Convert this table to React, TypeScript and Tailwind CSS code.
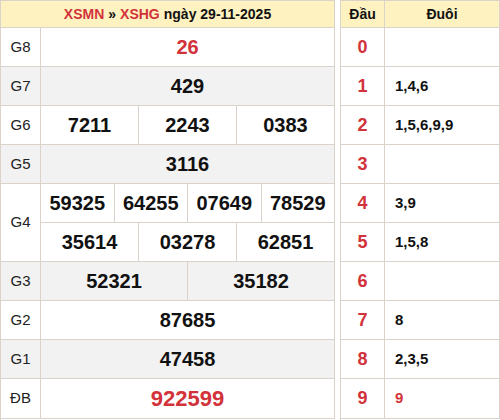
const border = "border-[#dbd2ca]";

type Row = { label: string; cells: string[][]; gray?: boolean; red?: boolean };

const rows: Row[] = [
  { label: "G8", cells: [["26"]], red: true },
  { label: "G7", cells: [["429"]], gray: true },
  { label: "G6", cells: [["7211", "2243", "0383"]] },
  { label: "G5", cells: [["3116"]], gray: true },
  { label: "G4", cells: [["59325", "64255", "07649", "78529"], ["35614", "03278", "62851"]] },
  { label: "G3", cells: [["52321", "35182"]], gray: true },
  { label: "G2", cells: [["87685"]] },
  { label: "G1", cells: [["47458"]], gray: true },
  { label: "ĐB", cells: [["922599"]], red: true },
];

const loto: [string, string][] = [
  ["0", ""],
  ["1", "1,4,6"],
  ["2", "1,5,6,9,9"],
  ["3", ""],
  ["4", "3,9"],
  ["5", "1,5,8"],
  ["6", ""],
  ["7", "8"],
  ["8", "2,3,5"],
  ["9", "9"],
];

const App = () => {
  return (
    <div
      className="flex gap-[5px] bg-white w-[500px] h-[420px]"
      style={{ fontFamily: '"Liberation Sans", Arial, sans-serif' }}
    >
      {/* Result table */}
      <div className={`w-[335px] border-l border-t ${border} flex flex-col`}>
        <div
          className={`h-[27px] bg-[#fff2c1] border-r border-b ${border} flex items-center justify-center text-[14px] font-bold text-[#111]`}
        >
          <span className="text-[#d2323a]">XSMN</span>
          <span className="mx-1">»</span>
          <span className="text-[#d2323a]">XSHG</span>
          <span className="ml-1">ngày 29-11-2025</span>
        </div>
        {rows.map((row, i) => (
          <div key={row.label} className={`flex ${row.gray ? "bg-[#f2f2f2]" : "bg-white"}`}>
            <div
              className={`w-[40px] shrink-0 border-r border-b ${border} flex items-center justify-center text-[15px] text-[#222]`}
            >
              {row.label}
            </div>
            <div className="flex-1 flex flex-col">
              {row.cells.map((line, j) => (
                <div key={j} className={`flex ${i === rows.length - 1 ? "h-[40px]" : "h-[39px]"}`}>
                  {line.map((num) => (
                    <div
                      key={num}
                      className={`flex-1 border-r border-b ${border} flex items-center justify-center text-[20px] font-bold ${
                        row.red ? "text-[#d2323a]" : "text-[#111]"
                      } ${row.label === "ĐB" ? "text-[22px]" : ""}`}
                    >
                      {num}
                    </div>
                  ))}
                </div>
              ))}
            </div>
          </div>
        ))}
      </div>

      {/* Loto table */}
      <div className={`w-[160px] border-l border-t ${border} flex flex-col`}>
        <div className="flex h-[27px] bg-[#fff2c1] text-[14px] font-bold text-[#111]">
          <div className={`w-[44px] border-r border-b ${border} flex items-center justify-center`}>Đầu</div>
          <div className={`flex-1 border-r border-b ${border} flex items-center justify-center`}>Đuôi</div>
        </div>
        {loto.map(([head, tail], i) => (
          <div key={head} className={`flex ${i === loto.length - 1 ? "h-[40px]" : "h-[39px]"}`}>
            <div
              className={`w-[44px] border-r border-b ${border} flex items-center justify-center text-[18px] font-bold text-[#d2323a]`}
            >
              {head}
            </div>
            <div
              className={`flex-1 border-r border-b ${border} flex items-center pl-[10px] text-[15px] font-bold ${
                head === "9" ? "text-[#d2323a]" : "text-[#111]"
              }`}
            >
              {tail}
            </div>
          </div>
        ))}
      </div>
    </div>
  );
};

export default App;
